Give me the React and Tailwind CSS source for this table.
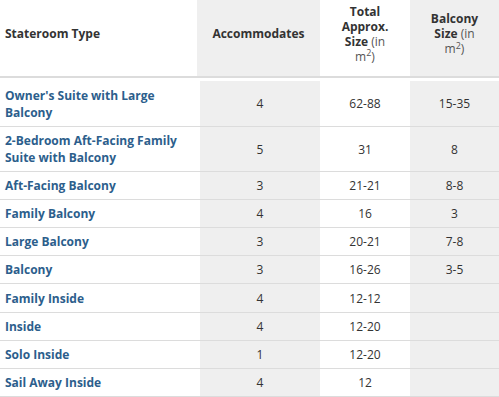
const rows = [
  { name: "Owner's Suite with Large Balcony", acc: '4', size: '62-88', balc: '15-35', h: 'h-[46px]' },
  { name: '2-Bedroom Aft-Facing Family Suite with Balcony', acc: '5', size: '31', balc: '8', h: 'h-[45px]' },
  { name: 'Aft-Facing Balcony', acc: '3', size: '21-21', balc: '8-8', h: 'h-[28px]' },
  { name: 'Family Balcony', acc: '4', size: '16', balc: '3', h: 'h-[28px]' },
  { name: 'Large Balcony', acc: '3', size: '20-21', balc: '7-8', h: 'h-[28px]' },
  { name: 'Balcony', acc: '3', size: '16-26', balc: '3-5', h: 'h-[28px]' },
  { name: 'Family Inside', acc: '4', size: '12-12', balc: '', h: 'h-[29px]' },
  { name: 'Inside', acc: '4', size: '12-20', balc: '', h: 'h-[28px]' },
  { name: 'Solo Inside', acc: '1', size: '12-20', balc: '', h: 'h-[28px]' },
  { name: 'Sail Away Inside', acc: '4', size: '12', balc: '', h: 'h-[28px]' },
];

const App = () => {
  return (
    <div
      className="w-[499px] h-[397px] overflow-hidden bg-white text-[12px] text-[#333]"
      style={{ fontFamily: '"Open Sans", "Liberation Sans", sans-serif' }}
    >
      {/* ── Header ── */}
      <div className="grid grid-cols-[197px_123px_90px_89px] h-[78px] border-b-2 border-[#dcdcdc] font-bold leading-[15px]">
        <div className="flex items-center pl-[5px] pb-[9px]">Stateroom Type</div>
        <div className="flex items-center justify-center bg-[#efefef] pb-[9px]">Accommodates</div>
        <div className="flex items-center justify-center text-center px-[18px] pb-[9px]">
          <span>
            Total Approx. Size <span className="font-normal text-[#555]">(in m<sup>2</sup>)</span>
          </span>
        </div>
        <div className="flex items-center justify-center text-center bg-[#efefef] px-[20px] pb-[9px]">
          <span>
            Balcony Size <span className="font-normal text-[#555]">(in m<sup>2</sup>)</span>
          </span>
        </div>
      </div>

      {/* ── Body ── */}
      <div className="mt-[3px]">
        {rows.map((r) => (
          <div
            key={r.name}
            className={`grid grid-cols-[200px_120px_90px_89px] border-b border-[#dcdcdc] leading-[17px] ${r.h}`}
          >
            <div className="flex items-center pl-[5px] pr-2 font-bold text-[#2c5e8c]">{r.name}</div>
            <div className="flex items-center justify-center bg-[#efefef]">{r.acc}</div>
            <div className="flex items-center justify-center">{r.size}</div>
            <div className="flex items-center justify-center bg-[#efefef]">{r.balc}</div>
          </div>
        ))}
      </div>
    </div>
  );
};

export default App;
